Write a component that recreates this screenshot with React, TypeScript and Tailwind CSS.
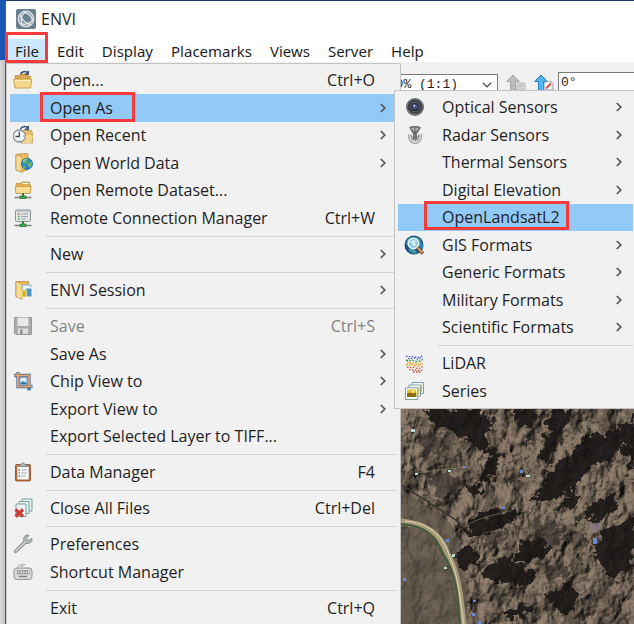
import clsx from 'clsx'
import type { ReactNode } from 'react'

interface Item {
  label: string
  icon?: ReactNode
  shortcut?: string
  arrow?: boolean
  disabled?: boolean
  active?: boolean
  submenu?: Item[][]
}

function Svg({ children }: { children: ReactNode }) {
  return (
    <svg viewBox="0 0 20 20" className="h-5 w-5 shrink-0" fill="none" aria-hidden="true">
      {children}
    </svg>
  )
}

const Folder = () => (
  <>
    <path d="M2 5.500h5l1-1.500h6.500v2h3V17H2z" fill="#d9a94e" stroke="#b98a3c" strokeWidth=".6" />
    <path d="M.6 9.500 2 9h17l-1.300 9H2z" fill="#f3d58c" stroke="#c4974a" strokeWidth=".8" />
    <path d="M2 10.500h15.500" stroke="#fdf0c4" />
  </>
)

const BackArrow = () => (
  <path d="M7.500 4.500C8 1.500 13 .5 14.500 3M15.300.8v3.400h-3.500" stroke="#3d5670" strokeWidth="1.500" />
)

const OpenIcon = () => (
  <Svg>
    <Folder />
    <BackArrow />
  </Svg>
)

const RecentIcon = () => (
  <Svg>
    <path d="M7 5.500h11.500l.8 2v10.500H8z" fill="#e8bd66" stroke="#b98a3c" strokeWidth=".7" />
    <path d="M10 10h9.500l-1 8H9z" fill="#f3d58c" />
    <BackArrow />
    <circle cx="6.300" cy="11" r="6" fill="#f7f9fa" stroke="#8d969c" strokeWidth="1.300" />
    <path d="M6.300 6.500V11.500H2.500" stroke="#444d55" strokeWidth="1.300" />
    <path d="M6.300 15.500v1M10.300 11h1" stroke="#778" />
  </Svg>
)

const WorldIcon = () => (
  <Svg>
    <path d="M3 1.500 8 .8h7v16l-7 2-5-2z" fill="#e9bd60" stroke="#b98a3c" strokeWidth=".8" />
    <path d="M3 1.500 9 4v15.500l-6-2.700z" fill="#f8dc96" stroke="#c4974a" strokeWidth=".8" />
    <circle cx="14" cy="10.800" r="5.600" fill="#2d86cf" stroke="#1d5f9f" strokeWidth=".7" />
    <path d="M11 6.500c2-1.500 4-.8 4.500.3l-1.700 1.500.4 1.700-2.300.8-1.900-1.400zM15.500 9.500l3.200-.6c1 2-.4 4.500-2 5.600l-1.200-1.800-.8-1.600zM9.500 12l2.500 1 .5 2.500c-1.400-.4-2.500-1.600-3-3.500z" fill="#69b84d" />
    <path d="M10.300 9c.4-1.500 1.500-2.600 3-3" stroke="#b9e2fa" />
  </Svg>
)

const NetworkBase = () => (
  <>
    <path d="M10 13v4" stroke="#3e7c4a" strokeWidth="2" />
    <path d="M1.500 17.500h17" stroke="#777f83" strokeWidth="1.500" />
    <path d="M7 16h6v2.500H7z" fill="#41ad51" stroke="#237333" strokeWidth=".8" />
  </>
)

const RemoteIcon = () => (
  <Svg>
    <path d="M3 3.500h5l1-1.500h7.500v3h1V13H3z" fill="#e3b152" stroke="#b98a3c" strokeWidth=".7" />
    <path d="M2 6.500h16.300l-1.200 7H3z" fill="#f8dc90" stroke="#c4974a" strokeWidth=".8" />
    <path d="M9.500 3.500h6" stroke="#fff" />
    <NetworkBase />
  </Svg>
)

const ConnectionIcon = () => (
  <Svg>
    <rect x="2.500" y="2" width="15" height="11.500" rx="1" fill="#e3e7e8" stroke="#899196" />
    <path d="M3 3h14" stroke="#a5adb1" />
    <path d="M5 6h1.500" stroke="#c05348" strokeWidth="1.300" />
    <path d="M5 8.500h1.500M5 11h1.500" stroke="#59a25c" strokeWidth="1.300" />
    <path d="M8 6h7M8 8.500h7M8 11h5" stroke="#9ba4aa" />
    <NetworkBase />
  </Svg>
)

const SessionIcon = () => (
  <Svg>
    <path d="M3 1.500h12.500v15H3z" fill="#e9bd60" stroke="#b98a3c" strokeWidth=".8" />
    <path d="M9 5h9v11.500H9z" fill="#e6f2fa" stroke="#7ba6c3" strokeWidth=".8" />
    <path d="M12 8h7v9h-7z" fill="#4c93c9" stroke="#fff" />
    <path d="M3 1.500 9 4v15.500l-6-2.700z" fill="#f8dc96" stroke="#c4974a" strokeWidth=".8" />
    <path d="M9 10h4.500v7H9z" fill="#d7b41e" stroke="#f5edb0" strokeWidth=".8" />
  </Svg>
)

const SaveIcon = () => (
  <Svg>
    <path d="M1.500 1.500h17v17H3l-1.500-1.500z" fill="#a9abac" stroke="#969899" />
    <path d="M4.500 1.500h11v8.500h-11z" fill="#e8e9e9" />
    <path d="M5 12.500h10V18H5z" fill="#dedfdf" />
    <path d="M7 13.500h2.500V18H7z" fill="#8c8e8f" />
  </Svg>
)

const ChipIcon = () => (
  <Svg>
    <path d="M1 4.500h15v15" stroke="#53759f" strokeWidth="3.400" />
    <path d="M5 1v14.500h14.500" stroke="#53759f" strokeWidth="3.400" />
    <path d="M5 1.500v14H19M1.500 4.500H16V15" stroke="#eba667" strokeWidth="1.700" />
    <rect x="7" y="6.500" width="7" height="7" fill="#d9effa" stroke="#4b82b1" strokeWidth=".6" />
    <path d="m7 13 2.500-3 2 1.500 1.200-1 1 2.500z" fill="#2c77ad" />
  </Svg>
)

const ClipboardIcon = () => (
  <Svg>
    <rect x="2.500" y="2.500" width="15" height="16.500" rx="1" fill="#b66a3d" stroke="#894b28" strokeWidth=".8" />
    <path d="M4.300 4.500h11.400v13H4.300z" fill="#f9fafb" />
    <path d="M6 4.500V2.800h2L9 1h2l1 1.800h2v1.700z" fill="#b4babd" stroke="#777e82" strokeWidth=".7" />
    <path d="M5.500 8h1.500" stroke="#cf5044" strokeWidth="1.300" />
    <path d="M5.500 11h1.500" stroke="#5ca052" strokeWidth="1.300" />
    <path d="M5.500 14h1.500" stroke="#557fc2" strokeWidth="1.300" />
    <path d="M8 8h6M8 11h6M8 14h5" stroke="#9fa9b2" />
  </Svg>
)

const CloseFilesIcon = () => (
  <Svg>
    <path d="M9 1h10v12H9z" fill="#e0eeee" stroke="#7fa1a2" />
    <path d="M6 3.500h10v12H6z" fill="#e0eeee" stroke="#7fa1a2" />
    <path d="M3 6h10v12.500H3z" fill="#eaf4f4" stroke="#7fa1a2" />
    <path d="m2.500 11.500 7.500 7M10 11.500l-7.500 7" stroke="#cb3c35" strokeWidth="3.200" />
  </Svg>
)

const WrenchIcon = () => (
  <Svg>
    <path
      d="M18.800 4.200 15.700 6.500l-2.200-2L16 1.300C13.500.4 10.500 2 10.700 5.500c0 .7.100 1 .3 1.500L1.500 16.500c-1 1.500.8 3 2 2L13 9.300c3.700 1 7-1.800 5.800-5.100z"
      fill="#b5b8b9"
      stroke="#86898a"
    />
    <path d="m3 17 9-9" stroke="#ddd" />
  </Svg>
)

const KeyboardIcon = () => (
  <Svg>
    <path d="M5 5C5 1 9 5 10 1.500M8.500 5c.5-2.500 3-.8 3.800-3" stroke="#a0a2a3" />
    <rect x="1" y="6" width="18" height="11.500" rx="3" fill="#d8d9da" stroke="#919394" />
    <path d="M4 9h12.500M4 11.500h12.500" stroke="#7b7d7e" strokeWidth="1.400" strokeDasharray="1.600 .8" />
    <path d="M6 14.500h8" stroke="#7b7d7e" strokeWidth="1.400" />
  </Svg>
)

const LensIcon = () => (
  <Svg>
    <circle cx="11" cy="10" r="9" fill="#66696b" />
    <circle cx="11" cy="10" r="7.500" fill="#3c3f42" stroke="#77797b" strokeWidth=".6" />
    <circle cx="11" cy="10" r="4.600" fill="#262b3c" stroke="#696d78" strokeWidth=".8" />
    <circle cx="11" cy="9.800" r="2.600" fill="#4a5880" />
    <circle cx="10.200" cy="8.700" r="1.100" fill="#b9c6ed" />
    <path d="M4 13c2 5 10 6 14 1" stroke="#797c7e" />
  </Svg>
)

const RadarIcon = () => (
  <Svg>
    <path d="M4.500 9c-.8 12.500 13.800 12.500 13 0" stroke="#a8aaab" strokeWidth="1.600" />
    <path d="M7 9.500c-.3 8 8.300 8 8 0" stroke="#8d8f90" strokeWidth="1.600" />
    <path d="M9.300 11c0 4 3.400 4 3.400 0" stroke="#777" strokeWidth="1.300" />
    <path d="M5.500 2.500c2-1.500 9-1.500 11 0L12.500 9v3.500h-3V9z" fill="#77797b" stroke="#55585a" strokeWidth=".7" />
    <path d="M7 2.700c2 1 6 1 8 0L11 7z" fill="#c8cacb" />
    <path d="M11 3.500V9" stroke="#444" />
  </Svg>
)

const GisIcon = () => (
  <Svg>
    <circle cx="10" cy="10" r="9.500" fill="#164e83" />
    <path d="M3 5c3-4 9-4.500 13-1l1 3-3 2-4-1-4 3-4-1zM4 14l5-1 5 5c-4 1.500-8 0-10-4z" fill="#3c9c9b" />
    <path d="M15 6l4 3c.5 3-.5 5-2 6l-2-3z" fill="#2f82b5" />
    <circle cx="9.500" cy="8.500" r="5.200" fill="#8cc7e0" stroke="#e5eef2" strokeWidth="1.600" />
    <path d="m6.500 7 2.500-2 3 .8-1 2 1.500 2-3 2-1.200-2.500z" fill="#d1edf1" />
    <path d="m13.300 12.500 5.500 6" stroke="#6d3f22" strokeWidth="3.400" />
    <path d="m13.500 12.500 4.800 5.300" stroke="#e3a875" strokeWidth="1.800" />
  </Svg>
)

const LidarIcon = () => (
  <Svg>
    <path d="M2 3c4 2 5-1 9 1s6-2 8-1M4 5.500c4 1 5-2 8 0s5-2 7-1" stroke="#4b5fbd" strokeWidth="1.300" strokeDasharray="1.500 1.500" />
    <path d="M2 7c4 2 5-1 9 1s6-2 8-1" stroke="#4a9a56" strokeWidth="1.500" strokeDasharray="2 1.200" />
    <path d="M3 9.500c4 2 5-1 9 1s5-2 7-1M2 11.500c4 2 6-1 9 1s6-2 8-1" stroke="#e2a63a" strokeWidth="1.500" strokeDasharray="1.800 1" />
    <path d="M3 14c4 2 5-1 9 1s5-2 7-1M5 16.500c3 1 5 0 7 1s4-1 7 0M9 19h9" stroke="#cb4b35" strokeWidth="1.300" strokeDasharray="1.500 1.500" />
  </Svg>
)

const SeriesIcon = () => (
  <Svg>
    <path d="M8 1.500h11.500v11H8z" fill="#fff" stroke="#7b9fa8" />
    <path d="M5 4h11.500v11H5z" fill="#fff" stroke="#7b9fa8" />
    <path d="M17.500 3.500v7.500M14.800 6v7" stroke="#d8bf48" strokeWidth="1.300" />
    <path d="M1.500 6.800h12.300v11.700H1.500z" fill="#fff" stroke="#7b9fa8" />
    <path d="M3 8.500h9.300v7.500H3z" fill="#e6c229" />
    <path d="M3 12.500c3-2 6 1 9.300-1v4.500H3z" fill="#8d6d13" />
    <circle cx="9" cy="10.500" r="1.200" fill="#fff5a0" />
  </Svg>
)

const fileMenu: Item[][] = [
  [
    { label: 'Open...', icon: <OpenIcon />, shortcut: 'Ctrl+O' },
    {
      label: 'Open As',
      arrow: true,
      active: true,
      submenu: [
        [
          { label: 'Optical Sensors', icon: <LensIcon />, arrow: true },
          { label: 'Radar Sensors', icon: <RadarIcon />, arrow: true },
          { label: 'Thermal Sensors', arrow: true },
          { label: 'Digital Elevation', arrow: true },
          { label: 'OpenLandsatL2', active: true },
          { label: 'GIS Formats', icon: <GisIcon />, arrow: true },
          { label: 'Generic Formats', arrow: true },
          { label: 'Military Formats', arrow: true },
          { label: 'Scientific Formats', arrow: true },
        ],
        [
          { label: 'LiDAR', icon: <LidarIcon /> },
          { label: 'Series', icon: <SeriesIcon /> },
        ],
      ],
    },
    { label: 'Open Recent', icon: <RecentIcon />, arrow: true },
    { label: 'Open World Data', icon: <WorldIcon />, arrow: true },
    { label: 'Open Remote Dataset...', icon: <RemoteIcon /> },
    { label: 'Remote Connection Manager', icon: <ConnectionIcon />, shortcut: 'Ctrl+W' },
  ],
  [{ label: 'New', arrow: true }],
  [{ label: 'ENVI Session', icon: <SessionIcon />, arrow: true }],
  [
    { label: 'Save', icon: <SaveIcon />, shortcut: 'Ctrl+S', disabled: true },
    { label: 'Save As', arrow: true },
    { label: 'Chip View to', icon: <ChipIcon />, arrow: true },
    { label: 'Export View to', arrow: true },
    { label: 'Export Selected Layer to TIFF...' },
  ],
  [{ label: 'Data Manager', icon: <ClipboardIcon />, shortcut: 'F4' }],
  [{ label: 'Close All Files', icon: <CloseFilesIcon />, shortcut: 'Ctrl+Del' }],
  [
    { label: 'Preferences', icon: <WrenchIcon /> },
    { label: 'Shortcut Manager', icon: <KeyboardIcon /> },
  ],
  [{ label: 'Exit', shortcut: 'Ctrl+Q' }],
]

function MenuRow({ item, nested }: { item: Item; nested?: boolean }) {
  return (
    <li className="relative odd:h-[27px] even:h-7" role="none">
      <button
        type="button"
        role="menuitem"
        disabled={item.disabled}
        className={clsx(
          'flex h-full w-full items-center pb-px text-left',
          item.active && 'bg-[#91c9f7]',
          item.disabled ? 'text-[#838383]' : 'text-[#1f1f1f]',
        )}
      >
        <span className={clsx('flex shrink-0', nested ? 'w-11 pl-1.5' : 'w-10 pl-[3px]')}>{item.icon}</span>
        <span className="flex-1 whitespace-nowrap">{item.label}</span>
        {item.shortcut && <span className="pr-[22px]">{item.shortcut}</span>}
        {item.arrow && (
          <svg viewBox="0 0 6 10" className="mr-[11px] h-2.5 w-1.5" fill="none" aria-hidden="true">
            <path d="m.8 1 4 4-4 4" stroke="#555" strokeWidth="1.700" />
          </svg>
        )}
      </button>
      {/* callout frame around the highlighted entry */}
      {item.active && (
        <span
          className={clsx(
            'pointer-events-none absolute border-3 border-[#f93a3b]',
            nested ? '-top-[3px] left-[26px] h-[29px] w-[145px]' : '-top-0.5 left-[30px] h-[30px] w-[95px]',
          )}
        />
      )}
      {item.submenu && <Menu groups={item.submenu} nested />}
    </li>
  )
}

function Menu({ groups, nested }: { groups: Item[][]; nested?: boolean }) {
  return (
    <div
      role="menu"
      className={clsx(
        'absolute z-10 border border-[#c3c3c3] bg-[#f1f1f1] p-[3px]',
        "font-['Open_Sans','Noto_Sans',sans-serif] text-base leading-5",
        nested ? '-top-1 left-full -ml-[3px] w-[243px]' : 'top-full left-0 mt-px w-[395px]',
      )}
    >
      {groups.map((group, i) => (
        <div key={group[0].label}>
          {i > 0 && <hr className={clsx('my-1 border-[#d5d5d5]', nested ? 'ml-10' : 'ml-9')} />}
          <ul role="none">
            {group.map((item) => (
              <MenuRow key={item.label} item={item} nested={nested} />
            ))}
          </ul>
        </div>
      ))}
    </div>
  )
}

// Shaded-relief view of the loaded scene; the strip above y=0 sits behind the open menus
function SatelliteView() {
  return (
    <svg
      viewBox="0 -311 233 526"
      preserveAspectRatio="xMinYMax slice"
      className="min-h-0 w-full flex-1 bg-[#65574a]"
      aria-label="Satellite image"
    >
      <defs>
        <filter id="terrain" x="0" y="0" width="100%" height="100%" colorInterpolationFilters="sRGB">
          <feTurbulence type="fractalNoise" baseFrequency=".06 .045" numOctaves="5" seed="8" result="n" />
          <feDiffuseLighting in="n" surfaceScale="9" diffuseConstant="1.100" lightingColor="#8b7967">
            <feDistantLight azimuth="215" elevation="55" />
          </feDiffuseLighting>
        </filter>
        <filter id="ragged" x="-10%" y="-10%" width="120%" height="120%" colorInterpolationFilters="sRGB">
          <feTurbulence type="fractalNoise" baseFrequency=".11" numOctaves="4" seed="21" />
          <feDisplacementMap in="SourceGraphic" scale="20" xChannelSelector="R" yChannelSelector="G" />
          <feGaussianBlur stdDeviation=".7" />
        </filter>
        <filter id="ridges" x="0" y="0" width="100%" height="100%" colorInterpolationFilters="sRGB">
          <feTurbulence type="turbulence" baseFrequency=".05 .035" numOctaves="4" seed="13" />
          <feColorMatrix values="0 0 0 0 .07  0 0 0 0 .06  0 0 0 0 .05  3.500 0 0 0 -.8" />
        </filter>
        <filter id="grain" x="0" y="0" width="100%" height="100%" colorInterpolationFilters="sRGB">
          <feTurbulence type="fractalNoise" baseFrequency=".55" numOctaves="2" seed="4" />
          <feColorMatrix values=".7 0 0 0 .05  0 .7 0 0 .03  0 0 .7 0 .02  0 0 0 0 .12" />
        </filter>
      </defs>
      <rect y="-311" width="233" height="526" fill="#65574a" />
      <rect width="233" height="216" filter="url(#terrain)" />
      <rect width="233" height="216" filter="url(#ridges)" opacity=".35" />
      <path d="M0 80 50 115 65 150 65 216H0z" fill="#5f5548" opacity=".7" />
      <g filter="url(#ragged)">
        <path
          d="M20 24l22 6 6 12-30 8zM22 66l28-4 12 16-24 10zM90 110l22 0 0 16-30 14zM130 110l26 6 6 18-24 4zM146 160l24-4-6 12-16 2z"
          fill="#2c2522"
          opacity=".6"
        />
        <path
          d="M92 2l8 24 14 28M126 34l-4 34 14 4M148 4l-14 38-10 28M190 14l-24 22-18 26M178 58l-12 32M140 92l14 18 30 2 28-14M224 44l4 54M186 60l-4 46M92 128l20-14-8 24-36 36M180 116l12 22-10 20"
          stroke="#93816c"
          strokeWidth="4"
          fill="none"
          opacity=".7"
        />
        <path
          d="M20 0h62l8 14-5 30-12-8-18-14-20-6zM112 0h28l-8 16-14 8zM150 0h22l-14 32-14 24-4-10zM233 8l-26 16-22 2-20 24-10 6-14 22-16 18 24-4 26-14 12-20 24-10 22-16zM84 44l16-2-4 18-8 16-6-2zM64 78l14-6 6 8-14 8zM164 88l14-12-4 22-8 6zM190 92l22-8 8 12-18 16-16-4zM222 34l11 4v22l-9-14zM66 116l24-14 30 0-18 18-34 8zM54 142l20-4 4 18-14 4zM114 138l24-8 14 12-22 12-14-4zM82 158l28-10 26 18-8 14-28-8-18-2zM194 136l20-22 19-4v42l-20 20-14-18zM148 186l12-10 18 4-2 20-18 4zM104 204l24-12 2 10-22 10z"
          fill="#0c0a0a"
          opacity=".88"
        />
      </g>
      <rect width="233" height="216" filter="url(#grain)" />
      <path d="M1 76l66 43" stroke="#3b3830" strokeWidth="1.500" fill="none" />
      <path d="M20 3c-7 9-5 22-9 35L3 74M46 138c10-24 36-30 64-36l22-30M14 64l50-6M54 92l8 26" stroke="#a5a17b" strokeWidth="1" fill="none" opacity=".45" />
      <path d="M0 113c25 2 39 13 45 30 12 20 14 45 17 73" stroke="#a69b78" strokeWidth="7" fill="none" />
      <path d="M0 115c25 2 36 13 42 30 14 20 15 45 17 73" stroke="#455a3a" strokeWidth="2.500" fill="none" />
      <path d="M4 112c24 2 38 14 45 37 9 20 10 42 14 67" stroke="#ded4b6" strokeWidth="1" fill="none" />
      <path d="M10 20h4v3h-4zM14 64h3v2h-3zM47 61h3v2h-3zM51 145h3v3h-3zM43 158h3v2h-3zM125 66h4v2h-4z" fill="#b9d1cf" />
      <path d="M119 61h3v3h-3zM192 129h4v6h-4zM2 169h3v3H2zM72 191h3v2h-3zM71 204h3v3h-3zM77 212h3v3h-3zM101 98h3v2h-3zM45 130h3v3h-3zM63 57h2v2h-2z" fill="#6b89cf" />
      <path d="M188 114h12l-4 10h-5z" fill="#8d7a87" opacity=".8" />
    </svg>
  )
}

function UpArrow({ active }: { active?: boolean }) {
  return (
    <svg viewBox="0 0 20 20" className="h-5 w-5 shrink-0" fill="none" aria-hidden="true">
      <path
        d="M7 1 .8 7.500h3.700V17h5V7.500h3.700z"
        fill={active ? '#55b4ee' : '#bdbdbd'}
        stroke={active ? '#1c79bd' : '#a3a3a3'}
      />
      {active ? (
        <>
          <path d="M10 16V9.500c2-3 7-3 9 0V16z" fill="#f0f2f3" stroke="#9aa1a7" />
          <path d="m12 14.500 5-5" stroke="#d65446" strokeWidth="1.800" />
        </>
      ) : (
        <path d="M11 9h8v7h-8zM15 9v7M11 12h8" fill="#d5d5d5" stroke="#c0c0c0" />
      )}
    </svg>
  )
}

const menuBar = ['File', 'Edit', 'Display', 'Placemarks', 'Views', 'Server', 'Help']

export default function App() {
  return (
    <div className="flex h-screen overflow-hidden font-['Noto_Sans','Open_Sans',sans-serif] text-[15px] leading-5 text-[#1f1f1f]">
      <div className="flex w-[5px] shrink-0 flex-col bg-linear-to-r from-[#dcdcdc] to-[#bdbdbd]">
        <div className="h-15 bg-[#1955b3]" />
      </div>
      <div className="flex min-w-0 flex-1 flex-col border-t border-l border-t-[#1f3764] border-l-[#5b6066] bg-white">
        <header className="flex h-[38px] shrink-0 items-center gap-[5px] pb-0.5 pl-2.5">
          <svg viewBox="0 0 20 20" className="h-5 w-5" fill="none" aria-hidden="true">
            <rect width="20" height="20" rx="2" fill="#6b7f8d" />
            <circle cx="10" cy="10" r="7.800" fill="#9aa8b2" stroke="#d5dde2" strokeWidth="1.300" />
            <path d="M8 4c-4 3-4 8-1 11 4 0 7-1 9-3-1-4-4-7-8-8z" fill="#6c7f8c" />
            <path d="M11 2.500C5 5 4 11 7 17M8 3.500c5 1 8 4 9 9M3 14c5 2 10 1 14-3M4 6c2 5 5 8 11 10" stroke="#e3e9ec" strokeWidth="1.200" />
          </svg>
          <h1 className="font-['Open_Sans','Noto_Sans',sans-serif] text-base leading-5">ENVI</h1>
        </header>

        <nav className="relative flex h-[23px] shrink-0" role="menubar">
          {menuBar.map((label, i) => (
            <div key={label} className={clsx('relative', i === 0 && 'bg-[#cce8ff]')}>
              <button type="button" role="menuitem" className="h-full px-[9px]">
                {label}
              </button>
              {i === 0 && (
                <span className="pointer-events-none absolute -top-[7px] right-0 -bottom-px -left-px z-20 border-3 border-[#f93a3b]" />
              )}
            </div>
          ))}
          <Menu groups={fileMenu} />
        </nav>

        <div className="flex min-h-0 flex-1 flex-col bg-[#f0f0f0] pl-[395px]">
          <div className="flex h-9 shrink-0 items-start pt-2.5">
            <div className="relative -ml-6 shrink-0">
              <select
                aria-label="Zoom"
                className="h-7 w-[121px] appearance-none border border-[#7a7a7a] bg-white pb-2 pl-0.5 font-['Liberation_Mono',monospace] text-[13px]"
              >
                <option>100% (1:1)</option>
              </select>
              <svg viewBox="0 0 10 6" className="absolute top-2.5 right-1.5 h-1.5 w-2.5" fill="none" aria-hidden="true">
                <path d="m.8.8 4.200 4 4.200-4" stroke="#555" strokeWidth="1.300" />
              </svg>
            </div>
            <div className="flex shrink-0 gap-2 pt-0.5 pr-1 pl-2">
              <UpArrow />
              <UpArrow active />
            </div>
            <input
              aria-label="Rotation"
              defaultValue="0°"
              className="h-7 min-w-0 flex-1 border border-r-0 border-[#7a7a7a] bg-white px-0.5 pb-2 font-['Liberation_Mono',monospace] text-[13px]"
            />
          </div>
          <div className="flex min-h-0 flex-1">
            <SatelliteView />
          </div>
        </div>
      </div>
    </div>
  )
}
